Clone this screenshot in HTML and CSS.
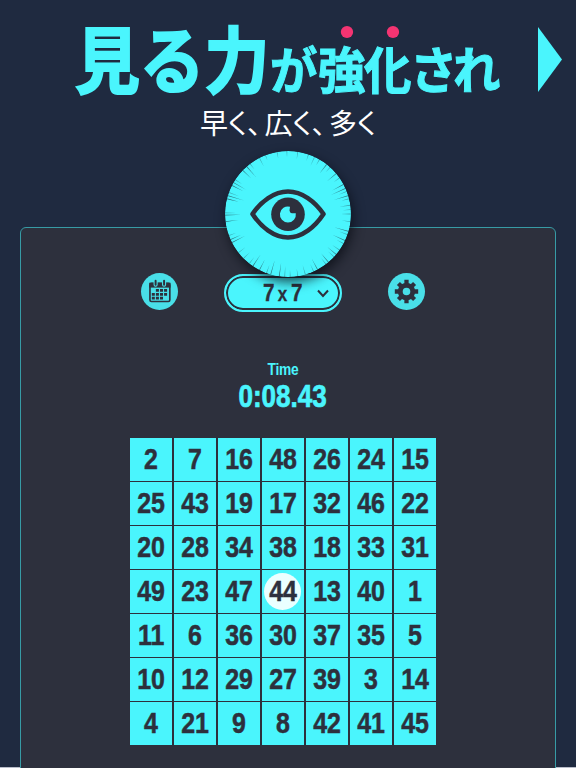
FILE: index.html
```html
<!DOCTYPE html>
<html lang="ja">
<head>
<meta charset="utf-8">
<title>見る力が強化され</title>
<link rel="stylesheet" href="styles.css">
</head>
<body>
<header class="hero">
  <h1 class="title"><span class="big">見る力</span><span class="small ga">が</span><span class="small em">強</span><span class="small em">化</span><span class="small kana">さ</span><span class="small kana">れ</span></h1>
  <svg class="arrow" width="24" height="65" viewBox="0 0 24 65"><path d="M0 0 24 32.5 0 65z" fill="#4af5fd"/></svg>
  <p class="subtitle"><span>早く、</span><span>広く、</span><span>多く</span></p>
</header>
<main class="panel">
  <svg class="eye" id="eye" width="126" height="126" viewBox="0 0 126 126">
    <circle cx="63" cy="63" r="63" fill="#4af5fd"/>
    <g id="rays" fill="#22414e"></g>
    <path d="M27.500 63C36 50.500 49 40.500 63 40.500s27 10 35.500 22.500C90 76 77 86.500 63 86.500S36 76 27.500 63z" fill="none" stroke="#2d303d" stroke-width="4.600" stroke-linejoin="round"/>
    <circle cx="63" cy="63.300" r="16.800" fill="#2d303d"/>
    <path d="M65 55.800A8 8 0 1 0 70.800 62.300H66.800Q64.700 62 64.500 59.500z" fill="#4af5fd"/>
  </svg>
  <nav class="toolbar">
    <button class="round" aria-label="Calendar">
      <svg width="37" height="37" viewBox="0 0 38 38">
        <rect x="9.200" y="10.700" width="20.400" height="18.600" rx="1.500" fill="none" stroke="#2d303d" stroke-width="1.700"/>
        <path d="M8.500 10h21.800v5h-21.800z" fill="#2d303d"/>
        <path d="M15 8.500v3.500M23.700 8.500v3.500" stroke="#49dfe8" stroke-width="4.200" stroke-linecap="round"/>
        <path d="M15 8v4M23.700 8v4" stroke="#2d303d" stroke-width="2" stroke-linecap="round"/>
        <path d="M15.300 16.500h3.100v2.800h-3.100zM19.500 16.500h3.100v2.800h-3.100zM23.700 16.500h3.100v2.800h-3.100zM11.100 20.500h3.100v2.800h-3.100zM15.300 20.500h3.100v2.800h-3.100zM19.500 20.500h3.100v2.800h-3.100zM23.700 20.500h3.100v2.800h-3.100zM11.100 24.500h3.100v2.800h-3.100zM15.300 24.500h3.100v2.800h-3.100zM19.500 24.500h3.100v2.800h-3.100z" fill="#2d303d"/>
      </svg>
    </button>
    <button class="select"><span class="select-text"><b>7</b><i>x</i><b>7</b></span>
      <svg class="chevron" width="12" height="9" viewBox="0 0 12 9"><path d="M1 1.500 6 7l5-5.500" fill="none" stroke="#2d303d" stroke-width="2"/></svg>
    </button>
    <button class="round" aria-label="Settings">
      <svg width="37" height="37" viewBox="0 0 38 38">
        <circle cx="19" cy="19" r="6.400" fill="none" stroke="#2d303d" stroke-width="5"/>
        <g stroke="#2d303d" stroke-width="4.400"><path d="M19 7v5M19 26v5M7 19h5M26 19h5M10.700 10.700l3.500 3.500M23.800 23.800l3.500 3.500M10.700 27.300l3.500-3.500M23.800 14.200l3.500-3.500"/></g>
      </svg>
    </button>
  </nav>
  <div class="timer"><span class="label">Time</span><span class="value">0:08.43</span></div>
  <section class="board" id="board"></section>
</main>
<script src="script.js"></script>
</body>
</html>
```
FILE: styles.css
```css
* { box-sizing: border-box; }
body {
  margin: 0;
  width: 576px;
  height: 768px;
  overflow: hidden;
  background: linear-gradient(#b9bdca, #b9bdca) 0 767px / 100% 1px no-repeat #1f2a40;
  color: #4af5fd;
  font-family: "Liberation Sans", Arial, sans-serif;
}
.hero {
  position: relative;
  height: 227px;
  padding-top: 11px;
  font-family: "Noto Sans CJK JP", sans-serif;
}
.title {
  display: flex;
  align-items: baseline;
  margin: 0 0 0 75px;
  height: 90px;
  line-height: 90px;
  white-space: nowrap;
  font-weight: 700;
  -webkit-text-stroke: 1px #4af5fd;
}
.title span { display: block; transform-origin: 0 50%; }
.title .big { width: 195px; font-size: 72px; -webkit-text-stroke-width: 2.2px; transform: scaleX(.9); }
.small { font-size: 50px; width: 46px; transform: translateY(2px) scaleX(.95); }
.title .ga { width: 48px; }
.title .kana { width: 43px; }
.em { position: relative; }
.em::before {
  content: "";
  position: absolute;
  left: 24px;
  top: 4px;
  width: 13px;
  height: 12px;
  border-radius: 50%;
  background: #f43472;
}
.arrow { position: absolute; left: 538px; top: 27px; }
.subtitle {
  display: flex;
  margin: 3px 0 0 200px;
  height: 36px;
  line-height: 36px;
  font-size: 28px;
  color: #fff;
  font-feature-settings: "palt";
  white-space: nowrap;
}
.subtitle span { width: 64.5px; }
.panel {
  position: relative;
  width: 536px;
  height: 560px;
  margin-left: 20px;
  border: 1px solid #379ba5;
  border-radius: 6px;
  background: #2d303d;
}
.eye {
  position: absolute;
  left: 204px;
  top: -77px;
  z-index: 2;
  border-radius: 50%;
  box-shadow: 2px 5px 12px rgba(8, 12, 20, .75);
}
.toolbar {
  display: flex;
  align-items: center;
  justify-content: space-between;
  width: 284px;
  height: 38px;
  margin: 44px 0 0 120.4px;
}
button { border: 0; padding: 0; }
.round {
  width: 37px;
  height: 37px;
  border-radius: 50%;
  background: #49dfe8;
}
.round svg { display: block; }
.select {
  display: flex;
  align-items: center;
  width: 118px;
  height: 38px;
  margin: 4px 1px 0 0;
  border: 2px solid #4af5fd;
  border-radius: 19px;
  background: #4af5fd;
  box-shadow: inset 0 0 0 2px #2d303d;
  color: #2d303d;
}
.select-text {
  display: flex;
  align-items: baseline;
  gap: 3.5px;
  margin-left: 37px;
  font: 700 23px "Liberation Sans", Arial, sans-serif;
  -webkit-text-stroke: .3px #2d303d;
}
.select-text b { width: 11px; transform: scaleX(.9); transform-origin: 0 50%; }
.select-text i { width: 10px; font-size: 20px; font-style: normal; transform: scaleX(.85); }
.chevron { margin-left: 15px; }
.timer {
  display: flex;
  flex-direction: column;
  align-items: center;
  width: 524px;
  margin-top: 49px;
  font-weight: 700;
}
.label { height: 22px; line-height: 22px; font-size: 16px; letter-spacing: -.3px; transform: scaleX(.86); }
.value { height: 34px; line-height: 32px; font-size: 31px; -webkit-text-stroke: .7px #4af5fd; transform: scaleX(.84); }
.board {
  display: grid;
  grid-template-columns: repeat(7, 1fr);
  grid-template-rows: repeat(7, 1fr);
  gap: 1.5px;
  width: 306px;
  height: 306.5px;
  margin: 23px 0 0 109px;
}
.cell {
  display: flex;
  align-items: center;
  justify-content: center;
  background: #4af5fd;
  color: #2d303d;
  font-size: 29px;
  font-weight: 700;
  letter-spacing: -.2px;
  -webkit-text-stroke: .5px #2d303d;
}
.cell span {
  display: flex;
  align-items: center;
  justify-content: center;
  width: 37px;
  height: 37px;
  border-radius: 50%;
}
.cell.active span { background: #eaffff; }
.cell b { display: block; transform: scaleX(.86); }
```
FILE: script.js
```js
const numbers = [
  2, 7, 16, 48, 26, 24, 15,
  25, 43, 19, 17, 32, 46, 22,
  20, 28, 34, 38, 18, 33, 31,
  49, 23, 47, 44, 13, 40, 1,
  11, 6, 36, 30, 37, 35, 5,
  10, 12, 29, 27, 39, 3, 14,
  4, 21, 9, 8, 42, 41, 45
];
document.getElementById("board").innerHTML = numbers
  .map(n => `<div class="cell${n === 44 ? " active" : ""}"><span><b>${n}</b></span></div>`)
  .join("");

// Fine wedges running inward from the rim of the eye badge: [angle, length]
const rays = [
  [0, 10], [7, 9], [16, 15], [19, 9], [25, 14], [28, 8], [35, 9],
  [40, 12], [43, 8], [50, 12], [53, 8], [62, 13], [66, 8], [74, 10],
  [81, 8], [88, 7], [93, 11], [98, 14], [106, 15], [110, 9], [117, 12], [124, 14], [128, 8],
  [135, 9], [142, 9], [153, 15], [156, 12], [160, 8], [173, 13], [179, 16],
  [181, 11], [194, 12], [197, 17], [200, 11], [207, 13], [210, 15], [213, 8],
  [224, 12], [229, 14], [233, 7], [243, 10], [249, 6], [260, 7], [269, 6], [279, 8],
  [289, 7], [295, 10], [300, 7], [308, 12], [312, 7], [320, 12], [325, 7], [332, 13],
  [336, 16], [339, 9], [343, 15], [346, 8], [352, 11], [356, 8]
];
document.getElementById("rays").innerHTML = rays
  .map(([a, l]) => `<path opacity="${l > 11 ? 0.75 : 0.45}" transform="rotate(${a} 63 63)" d="M126 62.6 ${126 - l} 63 126 63.4z"/>`)
  .join("");
```
